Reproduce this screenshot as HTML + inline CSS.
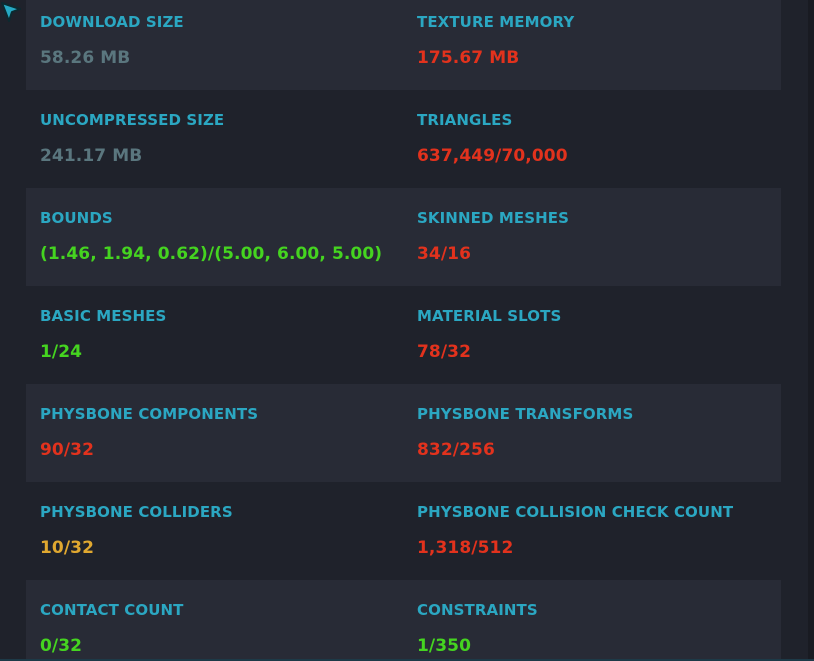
<!DOCTYPE html>
<html style="overflow:hidden;width:814px;height:661px"><head><style>
body{margin:0;width:814px;height:661px;background:#1f222b;overflow:hidden;position:relative;font-family:"DejaVu Sans","Liberation Sans",sans-serif;font-weight:bold}
.r{position:absolute;left:26px;width:755px;height:98px}
.s{background:#282b36}
.c{position:absolute;font-size:15px;white-space:nowrap;line-height:18px;letter-spacing:0.1px}
.v{font-size:17px}
.l{color:#2ba7c2}
.g{color:#5a767e}.rd{color:#e2321d}.gr{color:#45d420}.o{color:#e0a830}
.side{position:absolute;left:808px;top:0;width:6px;height:661px;background:#191b22}
</style></head><body>
<div class="r s" style="top:-8px"></div>
<div class="r s" style="top:188px"></div>
<div class="r s" style="top:384px"></div>
<div class="r s" style="top:580px;height:81px"></div>
<div class="side"></div>
<div style="position:absolute;left:0;top:659px;width:814px;height:2px;background:#1d3a48"></div>
<svg style="position:absolute;left:0;top:0" width="24" height="24"><path d="M2 3 L20 9 L12 12 L9 21 Z" fill="#26a9c4" stroke="#0c2a30" stroke-width="2" stroke-linejoin="round"/></svg>
<div class="c l" style="left:40px;top:13px">DOWNLOAD SIZE</div><div class="c v g" style="left:40px;top:49px">58.26 MB</div>
<div class="c l" style="left:417px;top:13px">TEXTURE MEMORY</div><div class="c v rd" style="left:417px;top:49px">175.67 MB</div>
<div class="c l" style="left:40px;top:111px">UNCOMPRESSED SIZE</div><div class="c v g" style="left:40px;top:147px">241.17 MB</div>
<div class="c l" style="left:417px;top:111px">TRIANGLES</div><div class="c v rd" style="left:417px;top:147px">637,449/70,000</div>
<div class="c l" style="left:40px;top:209px">BOUNDS</div><div class="c v gr" style="left:40px;top:245px">(1.46, 1.94, 0.62)/(5.00, 6.00, 5.00)</div>
<div class="c l" style="left:417px;top:209px">SKINNED MESHES</div><div class="c v rd" style="left:417px;top:245px">34/16</div>
<div class="c l" style="left:40px;top:307px">BASIC MESHES</div><div class="c v gr" style="left:40px;top:343px">1/24</div>
<div class="c l" style="left:417px;top:307px">MATERIAL SLOTS</div><div class="c v rd" style="left:417px;top:343px">78/32</div>
<div class="c l" style="left:40px;top:405px">PHYSBONE COMPONENTS</div><div class="c v rd" style="left:40px;top:441px">90/32</div>
<div class="c l" style="left:417px;top:405px">PHYSBONE TRANSFORMS</div><div class="c v rd" style="left:417px;top:441px">832/256</div>
<div class="c l" style="left:40px;top:503px">PHYSBONE COLLIDERS</div><div class="c v o" style="left:40px;top:539px">10/32</div>
<div class="c l" style="left:417px;top:503px">PHYSBONE COLLISION CHECK COUNT</div><div class="c v rd" style="left:417px;top:539px">1,318/512</div>
<div class="c l" style="left:40px;top:601px">CONTACT COUNT</div><div class="c v gr" style="left:40px;top:637px">0/32</div>
<div class="c l" style="left:417px;top:601px">CONSTRAINTS</div><div class="c v gr" style="left:417px;top:637px">1/350</div>
</body></html>
